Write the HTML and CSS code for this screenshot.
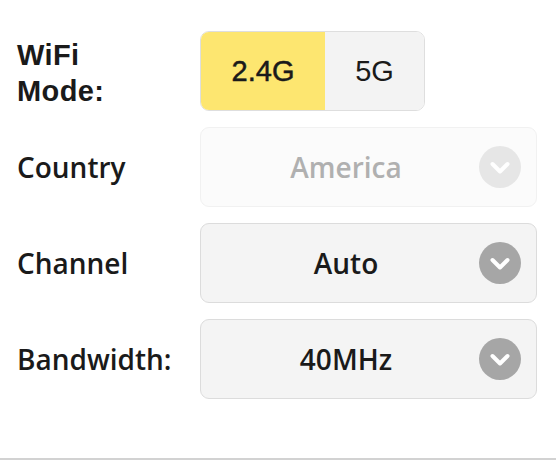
FILE: index.html
```html
<!DOCTYPE html>
<html>
<head>
<meta charset="utf-8">
<link rel="stylesheet" href="styles.css">
</head>
<body>
<div class="panel">
  <div class="row">
    <div class="label label-helv">WiFi<br>Mode:</div>
    <div class="segmented">
      <div class="seg seg-active">2.4G</div>
      <div class="seg">5G</div>
    </div>
  </div>
  <div class="row">
    <div class="label">Country</div>
    <div class="select select-disabled">
      <span class="value">America</span>
      <span class="chev">
        <svg width="42" height="42" viewBox="0 0 42 42"><circle cx="21" cy="21" r="21"/><path d="M13.5 18 L21 25.5 L28.5 18" fill="none" stroke="#fff" stroke-width="4" stroke-linecap="round" stroke-linejoin="round"/></svg>
      </span>
    </div>
  </div>
  <div class="row">
    <div class="label">Channel</div>
    <div class="select">
      <span class="value">Auto</span>
      <span class="chev">
        <svg width="42" height="42" viewBox="0 0 42 42"><circle cx="21" cy="21" r="21"/><path d="M13.5 18 L21 25.5 L28.5 18" fill="none" stroke="#fff" stroke-width="4" stroke-linecap="round" stroke-linejoin="round"/></svg>
      </span>
    </div>
  </div>
  <div class="row">
    <div class="label">Bandwidth:</div>
    <div class="select">
      <span class="value">40MHz</span>
      <span class="chev">
        <svg width="42" height="42" viewBox="0 0 42 42"><circle cx="21" cy="21" r="21"/><path d="M13.5 18 L21 25.5 L28.5 18" fill="none" stroke="#fff" stroke-width="4" stroke-linecap="round" stroke-linejoin="round"/></svg>
      </span>
    </div>
  </div>
</div>
</body>
</html>
```

FILE: styles.css
```css
html, body {
  margin: 0;
  padding: 0;
  background: #ffffff;
}
body {
  width: 556px;
  height: 464px;
  overflow: hidden;
}
.panel {
  box-sizing: border-box;
  height: 460px;
  padding-top: 31px;
  border-bottom: 2px solid #d2d2d2;
  display: flex;
  flex-direction: column;
  gap: 16px;
}
.row {
  display: flex;
  align-items: center;
  height: 80px;
}
.label {
  padding-left: 17px;
  box-sizing: border-box;
  width: 200px;
  font-family: "Open Sans", Lato, sans-serif;
  font-weight: 600;
  font-size: 28px;
  color: #1a1a1a;
}
.label-helv {
  font-family: "Liberation Sans", Arial, sans-serif;
  font-weight: 700;
  font-size: 29px;
  line-height: 36px;
  letter-spacing: 0.4px;
  padding-top: 3px;
}
.segmented {
  display: flex;
  height: 80px;
  border: 1px solid #dedede;
  border-radius: 9px;
  overflow: hidden;
  box-sizing: border-box;
}
.seg {
  display: flex;
  align-items: center;
  justify-content: center;
  font-family: "Liberation Sans", Arial, sans-serif;
  font-size: 29px;
  color: #1a1a1a;
  background: #f3f3f3;
  width: 99px;
}
.seg-active {
  background: #fde670;
  width: 124px;
  -webkit-text-stroke: 0.5px #1a1a1a;
}
.select {
  box-sizing: border-box;
  width: 337px;
  height: 80px;
  background: #f4f4f4;
  border: 1px solid #dcdcdc;
  border-radius: 9px;
  display: flex;
  align-items: center;
  padding-left: 12px;
  padding-right: 15px;
}
.value {
  flex: 1;
  text-align: center;
  font-family: "Open Sans", Lato, sans-serif;
  font-weight: 600;
  font-size: 28px;
  color: #1a1a1a;
}
.chev {
  display: flex;
  width: 42px;
  height: 42px;
}
.chev svg circle {
  fill: #a6a6a6;
}
.select-disabled {
  background: #fbfbfb;
  border-color: #f1f1f1;
}
.select-disabled .value {
  color: #b0b0b0;
}
.select-disabled .chev svg circle {
  fill: #e6e6e6;
}
```
